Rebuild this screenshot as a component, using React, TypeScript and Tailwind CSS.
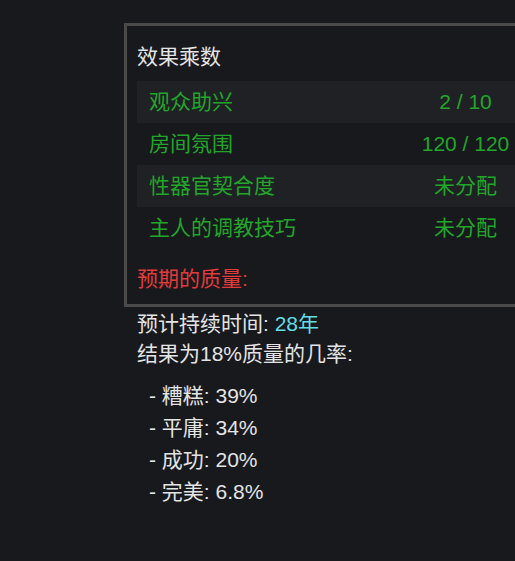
const rows = [
  { label: '观众助兴', value: '2 / 10' },
  { label: '房间氛围', value: '120 / 120' },
  { label: '性器官契合度', value: '未分配' },
  { label: '主人的调教技巧', value: '未分配' },
];

const chances = [
  { label: '糟糕', pct: '39%' },
  { label: '平庸', pct: '34%' },
  { label: '成功', pct: '20%' },
  { label: '完美', pct: '6.8%' },
];

export default function App() {
  return (
    <div
      className="min-h-screen overflow-hidden bg-[#17191d] pl-[124px] pt-[23px] text-[21px] text-[#e4e4e4]"
      style={{ fontFamily: '"Liberation Sans", "Noto Sans CJK SC", sans-serif' }}
    >
      {/* tooltip-ish panel, runs off the right edge in the game */}
      <div className="w-[400px] border-[3px] border-[#4a4a4a] pl-[10px] pt-[15px] pb-[9px]">
        <div className="mb-2 leading-8">效果乘数</div>
        <div>
          {rows.map((r, i) => (
            <div
              key={r.label}
              className={`flex h-[42px] items-center pl-3 pr-[5px] text-[#22a62a] ${i % 2 === 0 ? 'bg-[#1f2125]' : ''}`}
            >
              <span className="flex-1">{r.label}</span>
              <span className="w-[101px] text-center whitespace-nowrap">{r.value}</span>
            </div>
          ))}
        </div>
        <div className="mt-[14px] leading-8 text-[#e33b3b]">预期的质量:</div>
      </div>

      <div className="pl-[13px] pt-[2px]">
        <div className="leading-[30px]">
          预计持续时间: <span className="text-[#62dde4]">28年</span>
        </div>
        <div className="leading-[30px]">结果为18%质量的几率:</div>
        <ul className="mt-[11px] pl-3">
          {chances.map(c => (
            <li key={c.label} className="leading-8">
              - {c.label}: {c.pct}
            </li>
          ))}
        </ul>
      </div>
    </div>
  );
}
